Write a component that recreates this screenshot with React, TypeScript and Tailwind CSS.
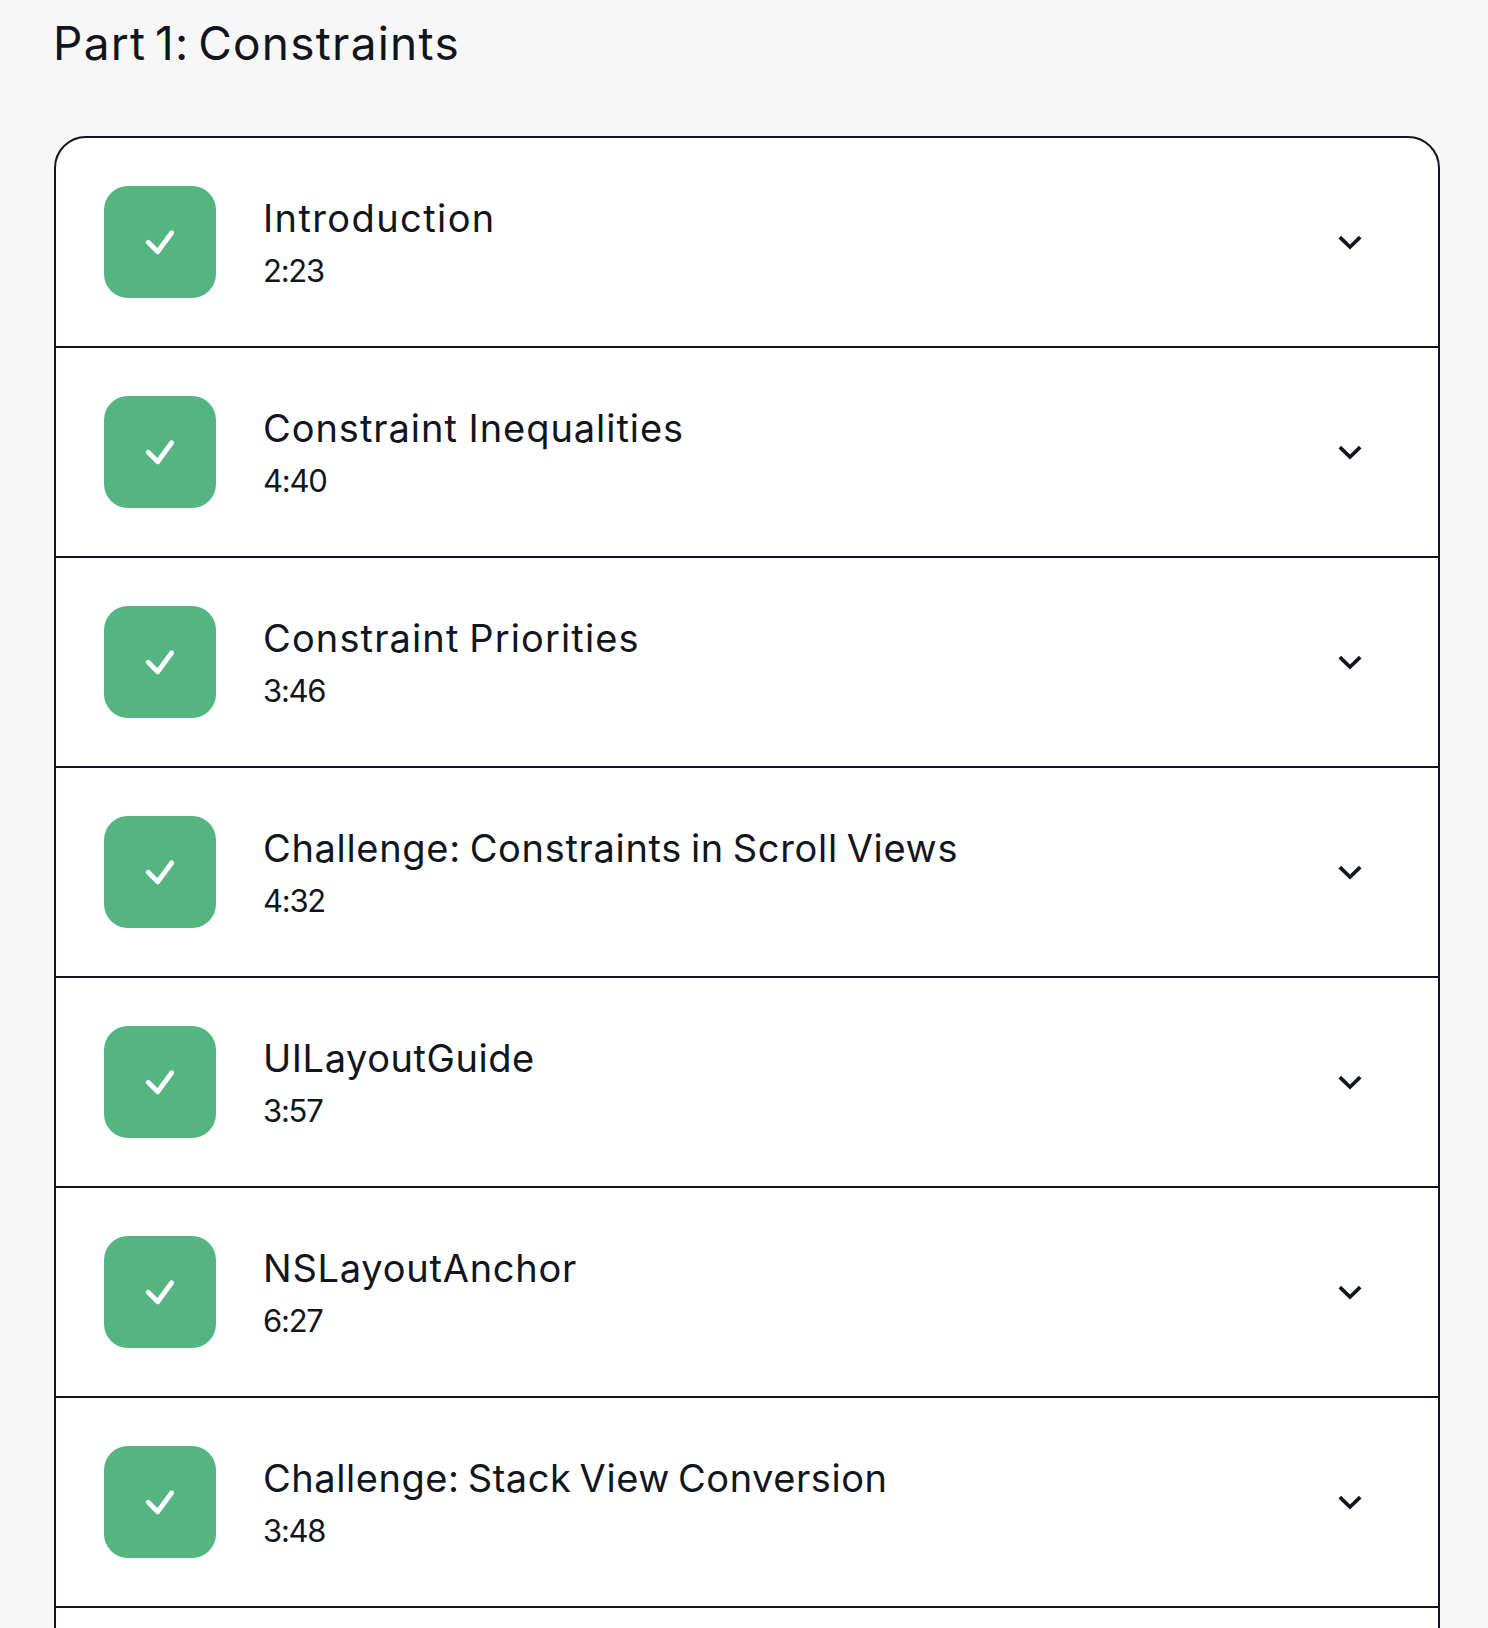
const lessons = [
  { title: "Introduction", spacing: "tracking-[1.4px]", duration: "2:23" },
  { title: "Constraint Inequalities", spacing: "tracking-[0.96px] [word-spacing:-1px]", duration: "4:40" },
  { title: "Constraint Priorities", spacing: "tracking-[1.13px] [word-spacing:-2px]", duration: "3:46" },
  { title: "Challenge: Constraints in Scroll Views", spacing: "tracking-[0.68px] [word-spacing:-2.5px]", duration: "4:32" },
  { title: "UILayoutGuide", spacing: "tracking-[0.56px]", duration: "3:57" },
  { title: "NSLayoutAnchor", spacing: "tracking-[0.76px]", duration: "6:27" },
  { title: "Challenge: Stack View Conversion", spacing: "tracking-[0.55px] [word-spacing:-3px]", duration: "3:48" },
];

type Lesson = (typeof lessons)[number];

function CompletedBadge() {
  return (
    <div className="flex size-28 shrink-0 items-center justify-center rounded-3xl bg-[#54b581]">
      <svg className="size-12" viewBox="0 0 48 48" fill="none" stroke="#fff" strokeWidth="4.8" strokeLinecap="round" strokeLinejoin="round">
        <path d="M12.2 24.3L21.7 33.7L35.7 14.8" />
      </svg>
    </div>
  );
}

function Chevron() {
  return (
    <svg className="size-20 shrink-0" viewBox="0 0 80 80" fill="none" stroke="currentColor" strokeWidth="3.7" strokeLinecap="butt" strokeLinejoin="miter">
      <path d="M29.8 35.1L40 45L50.2 35.1" />
    </svg>
  );
}

function LessonRow({ title, spacing, duration }: Lesson) {
  return (
    <li className="flex h-[210px] items-center border-b-2 border-[#11151e] px-12">
      <CompletedBadge />
      <div className="ml-[47px] flex min-w-0 flex-1 flex-col">
        <h2 className={`text-[38px] leading-[57px] whitespace-nowrap ${spacing}`}>{title}</h2>
        <span className="text-[31px] leading-[48px] tracking-[-1.25px] [font-feature-settings:'calt'_0]">{duration}</span>
      </div>
      <button type="button" aria-label={`Expand ${title}`}>
        <Chevron />
      </button>
    </li>
  );
}

export default function App() {
  return (
    <main className="h-[1628px] overflow-hidden bg-[#f7f7f7] px-[54px] font-['Inter',sans-serif] text-[#11151e]">
      <h1 className="-ml-px h-[136px] pt-[15px] text-[46px] leading-[56px] tracking-[1.25px] [word-spacing:-5.5px]">
        Part 1: Constraints
      </h1>
      <ul className="h-[1600px] w-[1386px] rounded-t-[32px] border-2 border-[#11151e] bg-white">
        {lessons.map((lesson) => (
          <LessonRow key={lesson.title} {...lesson} />
        ))}
      </ul>
    </main>
  );
}
